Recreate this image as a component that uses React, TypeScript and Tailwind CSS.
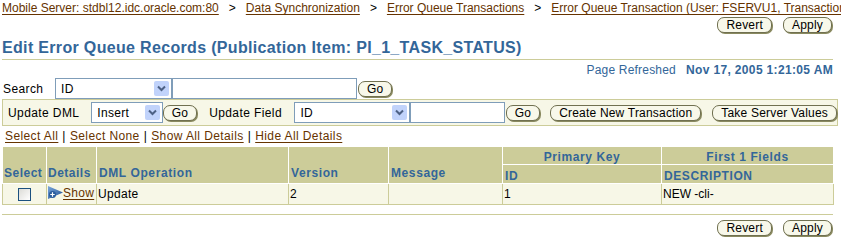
import React from "react";

function Btn({ children }: { children: React.ReactNode }) {
  return (
    <button className="h-[16px] px-[8px] rounded-[7px] border border-[#707050] bg-[#f8f8ea] shadow-[1px_1px_0_#8a8a60] text-[12px] leading-[14px] tracking-[0.2px] text-black font-['Liberation_Sans',sans-serif] whitespace-nowrap">
      {children}
    </button>
  );
}

function Sel({ value, w }: { value: string; w: number }) {
  return (
    <div
      className="relative h-[21px] border border-[#7f9db9] bg-white flex items-center pl-[5px] text-[12px] tracking-[0.3px] text-black"
      style={{ width: w }}
    >
      {value}
      <div className="absolute right-[2px] top-[2px] w-[15px] h-[15px] rounded-[2px] bg-[#c1d3fb] flex items-center justify-center">
        <svg width="9" height="7" viewBox="0 0 9 7">
          <path d="M1 1.5 L4.5 5 L8 1.5" fill="none" stroke="#4d6185" strokeWidth="2" />
        </svg>
      </div>
    </div>
  );
}

function Inp({ w }: { w: number }) {
  return <div className="h-[21px] border border-[#7f9db9] bg-white" style={{ width: w }} />;
}

function Link({ children }: { children: React.ReactNode }) {
  return <span className="text-[#663300] underline underline-offset-[2px]">{children}</span>;
}

export default function App() {
  const th = "bg-[#cccc99] text-[#336699] font-bold tracking-[0.6px] text-left align-bottom px-[2px] border border-white";
  const td = "border border-[#cccc99] px-[1px] align-middle text-black";
  return (
    <div className="w-[841px] h-[241px] overflow-hidden bg-white font-['Liberation_Sans',Arial,sans-serif] text-[12px] text-black">
      <div className="h-[16px] pl-[2px] pt-[1px] whitespace-nowrap overflow-hidden leading-[14px]">
        <Link>Mobile Server: stdbl12.idc.oracle.com:80</Link>
        <span className="mx-[10px]">&gt;</span>
        <Link>Data Synchronization</Link>
        <span className="mx-[10px]">&gt;</span>
        <Link>Error Queue Transactions</Link>
        <span className="mx-[10px]">&gt;</span>
        <Link>Error Queue Transaction (User: FSERVU1, Transaction ID: 1)</Link>
      </div>
      <div className="flex justify-end gap-[11px] pr-[9px] pt-[1px] h-[18px]">
        <Btn>Revert</Btn>
        <Btn>Apply</Btn>
      </div>
      <div className="ml-[2px] mr-[8px] mt-[5px] border-b border-[#cccc99] pb-[2px] text-[16px] leading-[18px] tracking-[0.33px] font-bold text-[#336699] whitespace-nowrap">
        Edit Error Queue Records (Publication Item: PI_1_TASK_STATUS)
      </div>
      <div className="flex justify-end pr-[8px] h-[18px] pt-[3px] leading-[14px] text-[#336699]">
        <span className="tracking-[0.2px]">Page Refreshed</span>
        <span className="ml-[10px] font-bold tracking-[0.35px]">Nov 17, 2005 1:21:05 AM</span>
      </div>
      <div className="flex items-center h-[21px] pl-[3px]">
        <span className="w-[52px] tracking-[0.4px]">Search</span>
        <Sel value="ID" w={117} />
        <Inp w={185} />
        <div className="ml-[1px]">
          <Btn>Go</Btn>
        </div>
      </div>
      <div className="ml-[2px] mr-[3px] h-[27px] border border-[#cccc99] bg-[#f7f7e7] flex items-center pl-[5px]">
        <span className="w-[84px] tracking-[0.4px]">Update DML</span>
        <Sel value="Insert" w={72} />
        <Btn>Go</Btn>
        <span className="ml-[12px] w-[86px] tracking-[0.4px]">Update Field</span>
        <Sel value="ID" w={116} />
        <Inp w={96} />
        <div className="ml-[1px]">
          <Btn>Go</Btn>
        </div>
        <div className="ml-[10px]">
          <Btn>Create New Transaction</Btn>
        </div>
        <div className="ml-[11px]">
          <Btn>Take Server Values</Btn>
        </div>
      </div>
      <div className="h-[20px] pl-[5px] pt-[3px] leading-[14px] whitespace-nowrap tracking-[0.4px]">
        <Link>Select All</Link>
        <span className="mx-[4px]">|</span>
        <Link>Select None</Link>
        <span className="mx-[4px]">|</span>
        <Link>Show All Details</Link>
        <span className="mx-[4px]">|</span>
        <Link>Hide All Details</Link>
      </div>
      <table className="ml-[2px] border-collapse border border-[#cccc99] table-fixed w-[831px] text-[12px] leading-[14px]">
        <colgroup>
          <col className="w-[44px]" />
          <col className="w-[50px]" />
          <col className="w-[192px]" />
          <col className="w-[100px]" />
          <col className="w-[114px]" />
          <col className="w-[159px]" />
          <col className="w-[172px]" />
        </colgroup>
        <thead>
          <tr className="h-[18px]">
            <th rowSpan={2} className={th + " pb-[3px] !px-[1px] !tracking-[0.5px]"}>Select</th>
            <th rowSpan={2} className={th + " pb-[3px] !px-[1px] !tracking-[0.5px]"}>Details</th>
            <th rowSpan={2} className={th + " pb-[3px]"}>DML Operation</th>
            <th rowSpan={2} className={th + " pb-[3px]"}>Version</th>
            <th rowSpan={2} className={th + " pb-[3px]"}>Message</th>
            <th className={th + " !text-center"}>Primary Key</th>
            <th className={th + " !text-center"}>First 1 Fields</th>
          </tr>
          <tr className="h-[19px]">
            <th className={th}>ID</th>
            <th className={th}>DESCRIPTION</th>
          </tr>
        </thead>
        <tbody>
          <tr className="h-[21px] bg-[#f7f7e7]">
            <td className={td + " text-center"}>
              <div className="inline-block align-middle w-[13px] h-[13px] border border-[#1c5180] bg-gradient-to-br from-[#dcdcd7] to-white" />
            </td>
            <td className={td + " whitespace-nowrap"}>
              <span className="inline-flex items-center">
                <svg width="15" height="15" viewBox="0 0 15 15" className="mr-[0px]">
                  <defs>
                    <linearGradient id="tg" x1="0" y1="0" x2="1" y2="1">
                      <stop offset="0" stopColor="#7aa6dc" />
                      <stop offset="1" stopColor="#1f4f8f" />
                    </linearGradient>
                  </defs>
                  <polygon points="0,1 15,7.5 0,14" fill="url(#tg)" />
                  <circle cx="4.5" cy="9.5" r="3.5" fill="#2a5c9c" />
                  <path d="M2.3 9.5 H6.7 M4.5 7.3 V11.7" stroke="white" strokeWidth="1.2" />
                </svg>
                <span className="tracking-[0.3px]">
                  <Link>Show</Link>
                </span>
              </span>
            </td>
            <td className={td + " tracking-[0.3px]"}>Update</td>
            <td className={td}>2</td>
            <td className={td}></td>
            <td className={td}>1</td>
            <td className={td}>NEW -cli-</td>
          </tr>
        </tbody>
      </table>
      <div className="ml-[2px] mr-[8px] mt-[9px] border-t border-[#cccc99]" />
      <div className="flex justify-end gap-[11px] pr-[9px] pt-[5px]">
        <Btn>Revert</Btn>
        <Btn>Apply</Btn>
      </div>
    </div>
  );
}
